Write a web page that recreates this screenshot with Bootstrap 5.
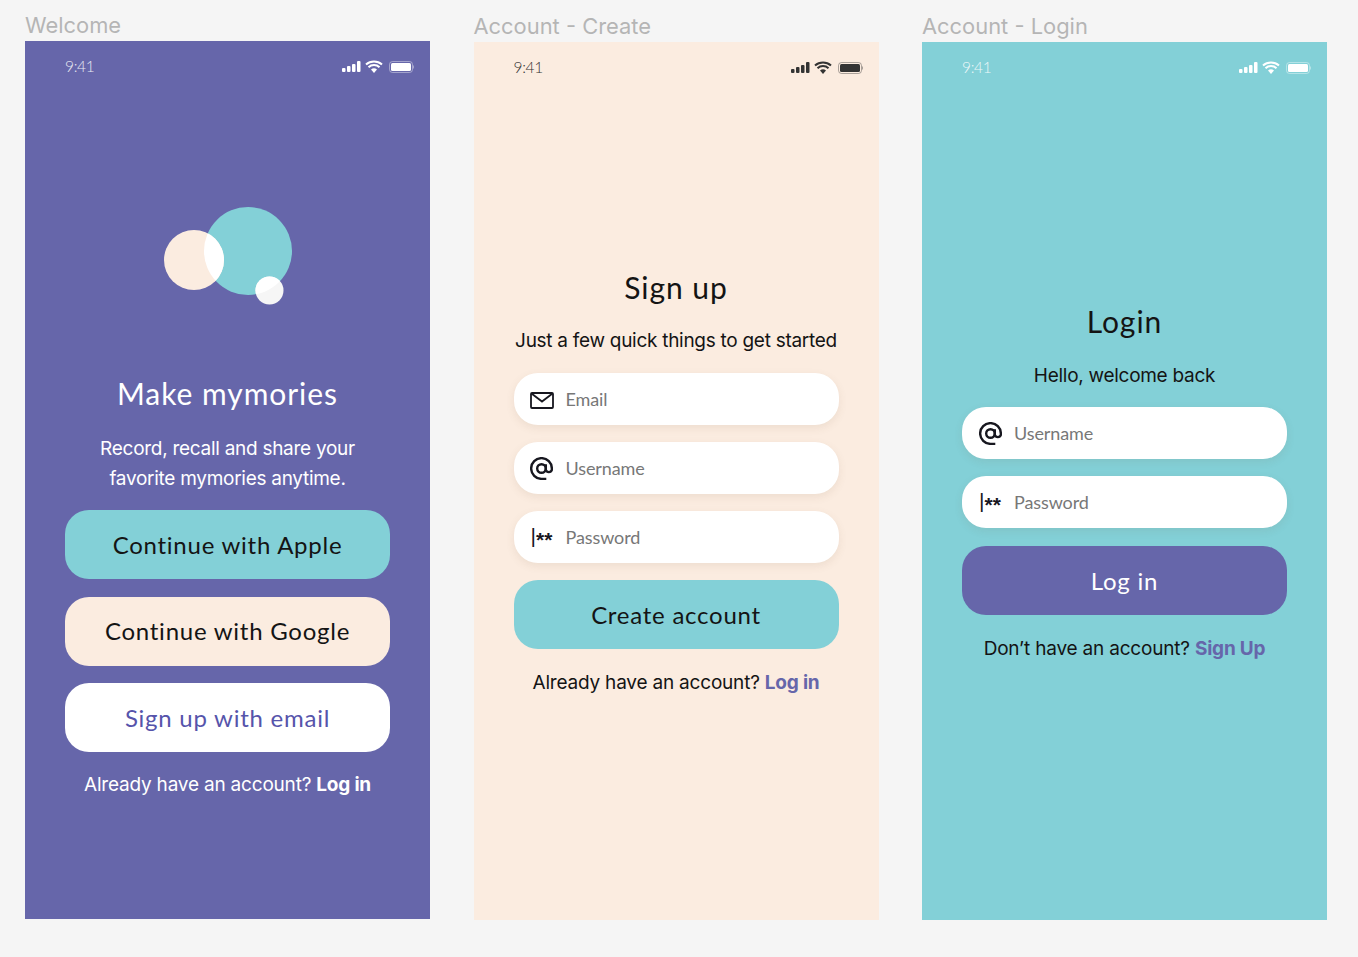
<!DOCTYPE html>
<html lang="en">
<head>
  <meta charset="UTF-8">
  <meta name="viewport" content="width=device-width, initial-scale=1.0">
  <title>Mymories - Account screens</title>
  <link rel="stylesheet" href="https://cdn.jsdelivr.net/npm/bootstrap@5.3.0/dist/css/bootstrap.min.css">
  <style>
    body { background: #f5f5f5; height: 957px; overflow: hidden; font-family: Inter, "Liberation Sans", sans-serif; }
    .board { padding: 14px 31px 0 25px; gap: 43.5px; }
    .screen-col { width: 405px; flex: none; }
    .screen-col.first { margin-top: -1px; }
    .frame-label { height: 28px; line-height: 25px; font-family: Inter, sans-serif; font-size: 21.9px; color: #b5b5b5; }
    .phone { height: 878px; padding: 0 40px; }
    .phone-purple { background: #6666aa; color: #fff; }
    .phone-peach { background: #fbece0; color: #141414; }
    .phone-teal { background: #83d0d7; color: #141414; }
    .status { height: 50px; padding-top: 2px; margin-right: -24px; font-size: 15.5px; font-family: Lato, sans-serif; font-weight: 300; letter-spacing: -.3px; }
    .status-time { opacity: .85; }
    .phone-peach .status-time { color: #333; opacity: 1; }
    .logo-box { margin-top: 116px; height: 98px; }
    .top-signup { height: 177px; }
    .top-login { height: 211px; }
    .screen-title { font-family: Lato, sans-serif; font-size: 30px; font-weight: 400; letter-spacing: .95px; line-height: 36px; margin: 0; }
    .logo-box + .screen-title { margin-top: 70px; }
    .lede { font-family: Inter, sans-serif; font-size: 19px; line-height: 30px; letter-spacing: -.28px; margin: 21px 0 17px; }
    .phone-purple .lede { margin: 23px 0 16px; }
    .phone-teal .lede { margin: 22px 0 16px; }
    .phone-pill { height: 52px; background: #fff; border-radius: 24px; box-shadow: 0 3px 8px rgba(120, 90, 60, .1); padding-left: 16px; margin-bottom: 17px; }
    .pill-icon { width: 24px; flex: none; color: #17171f; font: 400 21px/1 "Liberation Sans", sans-serif; white-space: nowrap; }
    .pw-stars { font-weight: 700; vertical-align: -4px; }
    .phone-pill .form-control { background: transparent; border: 0; box-shadow: none; padding: 1px 0 0 12px; font-family: Lato, sans-serif; font-size: 18px; letter-spacing: -.1px; }
    .phone-pill .form-control::placeholder { color: #777; opacity: 1; }
    .cta { height: 69px; border: 0; border-radius: 24px; font-family: Lato, sans-serif; font-size: 24px; letter-spacing: .75px; margin-bottom: 17.5px; display: flex; align-items: center; justify-content: center; }
    .cta-teal, .cta-teal:hover { background: #83d0d7; color: #141414; }
    .cta-peach, .cta-peach:hover { background: #fbece0; color: #141414; }
    .cta-white, .cta-white:hover { background: #fff; color: #5654ab; }
    .cta-purple, .cta-purple:hover { background: #6666aa; color: #fff; }
    .phone-peach .cta { margin-bottom: 18.5px; }
    .phone-teal .cta { margin-top: 18px; margin-bottom: 18.5px; }
    .foot-note { font-family: Inter, sans-serif; font-size: 19px; letter-spacing: -.2px; line-height: 30px; margin: 0; }
    .foot-note a { color: #6666aa; font-weight: 700; text-decoration: none; }
    .phone-purple .foot-note a { color: #fff; }
  </style>
</head>

<body>
  <div class="board d-flex">

    <!-- Welcome -->
    <div class="screen-col first">
      <div class="frame-label">Welcome</div>
      <div class="phone phone-purple text-center">
        <div class="status d-flex justify-content-between align-items-center">
          <span class="status-time">9:41</span>
          <svg width="72" height="14" viewBox="0 0 72 14" fill="#fff">
            <rect x="0" y="8" width="3.5" height="4" rx="1"/><rect x="5" y="6" width="3.5" height="6" rx="1"/><rect x="10" y="4" width="3.5" height="8" rx="1"/><rect x="15" y="1" width="3.5" height="11" rx="1"/>
            <path d="M24 4.5a12 12 0 0 1 16 0M26.5 7.2a8 8 0 0 1 11 0" fill="none" stroke="#fff" stroke-width="2"/><path d="M29 9.6a4.4 4.4 0 0 1 6 0L32 13z"/>
            <rect x="47.5" y="1.5" width="23" height="11" rx="3" fill="none" stroke="#fff" stroke-opacity=".4"/><rect x="49" y="3" width="20" height="8" rx="1.5"/><rect x="71" y="5.5" width="1" height="3" fill-opacity=".4"/>
          </svg>
        </div>
        <div class="logo-box">
          <svg width="128" height="98" viewBox="0 0 128 98">
            <defs><clipPath id="tealClip"><circle cx="84" cy="44" r="44"/></clipPath></defs>
            <circle cx="84" cy="44" r="44" fill="#83d0d7"/>
            <circle cx="30" cy="53" r="30" fill="#fbece0"/>
            <circle cx="30" cy="53" r="30" fill="#fff" clip-path="url(#tealClip)"/>
            <circle cx="105.500" cy="83.500" r="14" fill="#f6f6f6"/>
            <circle cx="105.500" cy="83.500" r="14" fill="#fff" clip-path="url(#tealClip)"/>
          </svg>
        </div>
        <h1 class="screen-title">Make mymories</h1>
        <p class="lede">Record, recall and share your<br>favorite mymories anytime.</p>
        <a href="#" class="btn cta cta-teal">Continue with Apple</a>
        <a href="#" class="btn cta cta-peach">Continue with Google</a>
        <a href="#" class="btn cta cta-white">Sign up with email</a>
        <p class="foot-note">Already have an account? <a href="#">Log in</a></p>
      </div>
    </div>

    <!-- Account - Create -->
    <div class="screen-col">
      <div class="frame-label">Account - Create</div>
      <div class="phone phone-peach text-center">
        <div class="status d-flex justify-content-between align-items-center">
          <span class="status-time">9:41</span>
          <svg width="72" height="14" viewBox="0 0 72 14" fill="#333">
            <rect x="0" y="8" width="3.5" height="4" rx="1"/><rect x="5" y="6" width="3.5" height="6" rx="1"/><rect x="10" y="4" width="3.5" height="8" rx="1"/><rect x="15" y="1" width="3.5" height="11" rx="1"/>
            <path d="M24 4.500a12 12 0 0 1 16 0M26.500 7.200a8 8 0 0 1 11 0" fill="none" stroke="#333" stroke-width="2"/><path d="M29 9.600a4.400 4.400 0 0 1 6 0L32 13z"/>
            <rect x="47.500" y="1.500" width="23" height="11" rx="3" fill="none" stroke="#333" stroke-opacity=".4"/><rect x="49" y="3" width="20" height="8" rx="1.500"/><rect x="71" y="5.500" width="1" height="3" fill-opacity=".4"/>
          </svg>
        </div>
        <div class="top-signup"></div>
        <h1 class="screen-title">Sign up</h1>
        <p class="lede">Just a few quick things to get started</p>
        <div class="phone-pill d-flex align-items-center">
          <span class="pill-icon"><svg width="24" height="17" viewBox="0 0 24 17" fill="none" stroke="currentColor" stroke-width="1.800"><rect x="1" y="1" width="22" height="15" rx="1"/><path d="M1.500 1.500 12 9.500 22.500 1.500"/></svg></span>
          <input class="form-control" type="text" placeholder="Email">
        </div>
        <div class="phone-pill d-flex align-items-center">
          <span class="pill-icon"><svg width="23" height="23" viewBox="0 0 24 24" fill="none" stroke="currentColor" stroke-width="2.500"><circle cx="12" cy="12" r="4.500"/><path d="M16.500 7.500v6a3.300 3.300 0 0 0 6.300 0V12A10.800 10.800 0 1 0 12 22.800h5"/></svg></span>
          <input class="form-control" type="text" placeholder="Username">
        </div>
        <div class="phone-pill d-flex align-items-center">
          <span class="pill-icon">|<span class="pw-stars">**</span></span>
          <input class="form-control" type="password" placeholder="Password">
        </div>
        <a href="#" class="btn cta cta-teal">Create account</a>
        <p class="foot-note">Already have an account? <a href="#">Log in</a></p>
      </div>
    </div>

    <!-- Account - Login -->
    <div class="screen-col">
      <div class="frame-label">Account - Login</div>
      <div class="phone phone-teal text-center">
        <div class="status d-flex justify-content-between align-items-center">
          <span class="status-time text-white">9:41</span>
          <svg width="72" height="14" viewBox="0 0 72 14" fill="#fff">
            <rect x="0" y="8" width="3.5" height="4" rx="1"/><rect x="5" y="6" width="3.5" height="6" rx="1"/><rect x="10" y="4" width="3.5" height="8" rx="1"/><rect x="15" y="1" width="3.5" height="11" rx="1"/>
            <path d="M24 4.500a12 12 0 0 1 16 0M26.500 7.200a8 8 0 0 1 11 0" fill="none" stroke="#fff" stroke-width="2"/><path d="M29 9.600a4.400 4.400 0 0 1 6 0L32 13z"/>
            <rect x="47.500" y="1.500" width="23" height="11" rx="3" fill="none" stroke="#fff" stroke-opacity=".4"/><rect x="49" y="3" width="20" height="8" rx="1.500"/><rect x="71" y="5.500" width="1" height="3" fill-opacity=".4"/>
          </svg>
        </div>
        <div class="top-login"></div>
        <h1 class="screen-title">Login</h1>
        <p class="lede">Hello, welcome back</p>
        <div class="phone-pill d-flex align-items-center">
          <span class="pill-icon"><svg width="23" height="23" viewBox="0 0 24 24" fill="none" stroke="currentColor" stroke-width="2.500"><circle cx="12" cy="12" r="4.500"/><path d="M16.500 7.500v6a3.300 3.300 0 0 0 6.300 0V12A10.800 10.800 0 1 0 12 22.800h5"/></svg></span>
          <input class="form-control" type="text" placeholder="Username">
        </div>
        <div class="phone-pill d-flex align-items-center">
          <span class="pill-icon">|<span class="pw-stars">**</span></span>
          <input class="form-control" type="password" placeholder="Password">
        </div>
        <a href="#" class="btn cta cta-purple">Log in</a>
        <p class="foot-note">Don’t have an account? <a href="#">Sign Up</a></p>
      </div>
    </div>

  </div>

  <script src="https://cdn.jsdelivr.net/npm/bootstrap@5.3.0/dist/js/bootstrap.bundle.min.js"></script>
</body>
</html>
